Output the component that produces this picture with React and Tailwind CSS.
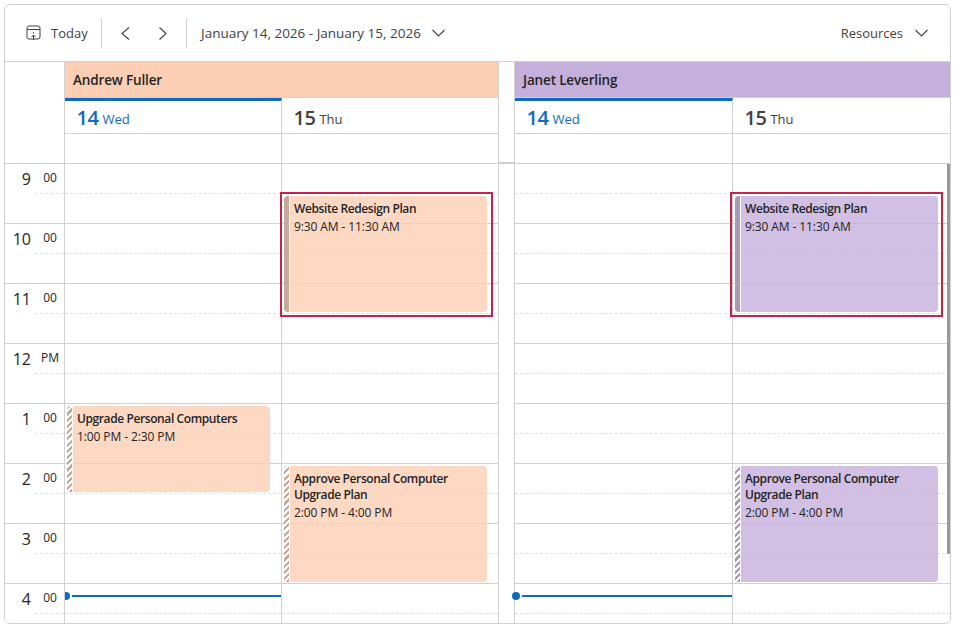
const hours = [
  ['9', '00'],
  ['10', '00'],
  ['11', '00'],
  ['12', 'PM'],
  ['1', '00'],
  ['2', '00'],
  ['3', '00'],
  ['4', '00'],
]

const rows = [0, 1, 2, 3, 4, 5, 6, 7]

function Chevron({ dir }) {
  const d = {
    left: 'M9 .5 2 6.5l7 6',
    right: 'M3.5 .5l6.5 6-6.5 6',
  }[dir]
  return (
    <svg width="12" height="13" viewBox="0 0 12 13" fill="none" stroke="#424242" strokeWidth="1.1">
      <path d={d} />
    </svg>
  )
}

function ChevronDown() {
  return (
    <svg width="13" height="8" viewBox="0 0 13 8" fill="none" stroke="#424242" strokeWidth="1.1">
      <path d="M.5 1l6 6 6-6" />
    </svg>
  )
}

function TodayIcon() {
  return (
    <svg width="15" height="16" viewBox="0 0 15 16" fill="none" stroke="#424242" strokeWidth="1">
      <rect x="1" y="1" width="13" height="13" rx="2" />
      <path d="M1 4.5h13" />
      <path d="M7.5 7v1.5M5.5 12l2-2 2 2M7.5 10v5" />
    </svg>
  )
}

function Event({ color, bar, striped, top, height, left, width, title, time }) {
  return (
    <div
      className={`absolute z-10 flex overflow-hidden rounded-[4px] ${color}`}
      style={{ top, height, left, width }}
    >
      <div className={`w-[6px] shrink-0 border-r border-white ${bar} ${striped ? 'striped' : ''}`} />
      <div className="pl-[4px] pt-[5px] pr-2 text-[12px] leading-4 text-[#242424]">
        <div className="font-semibold tracking-[-0.4px]">{title}</div>
        <div className="mt-[2px] tracking-[-0.1px]">{time}</div>
      </div>
    </div>
  )
}

function Selection({ left }) {
  return (
    <div
      className="absolute top-[28px] z-20 h-[125px] w-[213px] border-2 border-[#c4244a]"
      style={{ left }}
    />
  )
}

function DayColumn({ width, last, children }) {
  return (
    <div
      className={`relative shrink-0 ${last ? '' : 'border-r border-[#d1d1d1]'}`}
      style={{ width }}
    >
      {rows.map((r) => (
        <div key={r} className="h-[60px] border-b border-[#d1d1d1]">
          <div className="h-[30px] border-b border-dashed border-[#e0e0e0]" />
        </div>
      ))}
      {children}
    </div>
  )
}

function NowLine({ left, width }) {
  return (
    <>
      <div className="absolute top-[428px] left-[-3px] z-10 h-2 w-2 rounded-full bg-[#0f6cbd]" />
      <div
        className="absolute top-[431px] z-10 h-[2px] bg-[#0f6cbd]"
        style={{ left, width }}
      />
    </>
  )
}

function DayHead({ num, name, active, width, last }) {
  return (
    <div
      className={`flex h-[36px] shrink-0 items-center border-b border-[#d1d1d1] pl-[11.5px] ${
        active ? 'border-t-[3px] border-t-[#0f6cbd] pt-[1px] text-[#0f6cbd]' : 'pt-[4px] text-[#424242]'
      } ${last ? '' : 'border-r border-r-[#d1d1d1]'}`}
      style={{ width }}
    >
      <span className="text-[20px] font-semibold leading-6 tracking-[-0.5px]">{num}</span>
      <span className="ml-[4px] pt-[3px] text-[13px] leading-5">{name}</span>
    </div>
  )
}

function AllDay({ width, last }) {
  return (
    <div
      className={`h-[30px] shrink-0 border-b border-[#d1d1d1] ${last ? '' : 'border-r'}`}
      style={{ width }}
    />
  )
}

export default function App() {
  return (
    <div className="h-[627px] w-[960px] bg-white pt-[4px] pl-[4px] font-['Open_Sans',sans-serif]">
      <style>{`.striped{background-image:repeating-linear-gradient(-45deg,transparent,transparent 2.2px,#fff 2.2px,#fff 4.4px)}`}</style>
      <div className="relative flex h-[620px] w-[947px] flex-col overflow-hidden rounded-[6px] border border-[#d1d1d1]">
        {/* toolbar */}
        <div className="flex h-[57px] shrink-0 items-center border-b border-[#d1d1d1] text-[13px] text-[#424242]">
          <div className="ml-[21px] flex w-[75px] items-center">
            <TodayIcon />
            <span className="ml-[10px] pt-[1px]">Today</span>
          </div>
          <div className="h-[30px] w-px bg-[#d1d1d1]" />
          <div className="flex w-[84px] items-center justify-between px-[18px]">
            <Chevron dir="left" />
            <Chevron dir="right" />
          </div>
          <div className="h-[30px] w-px bg-[#d1d1d1]" />
          <span className="ml-[14px] pt-[1px] text-[13.5px]">January 14, 2026 - January 15, 2026</span>
          <span className="ml-[11px] flex"><ChevronDown /></span>
          <div className="ml-auto mr-[22px] flex items-center">
            <span className="pt-[1px]">Resources</span>
            <span className="ml-[12px] flex"><ChevronDown /></span>
          </div>
        </div>

        {/* header */}
        <div className="flex h-[102px] shrink-0">
          <div className="w-[60px] shrink-0 border-r border-b border-[#d1d1d1]" />
          <div className="w-[434px] shrink-0">
            <div className="flex h-[36px] items-center border-r border-b border-[#d1d1d1] bg-[#fccfb5] pl-2 pt-[2px] text-[13.5px] font-semibold tracking-[-0.15px] text-[#242424]">
              Andrew Fuller
            </div>
            <div className="flex">
              <DayHead num="14" name="Wed" active width={217} />
              <DayHead num="15" name="Thu" width={217} />
            </div>
            <div className="flex">
              <AllDay width={217} />
              <AllDay width={217} />
            </div>
          </div>
          <div className="w-[16px] shrink-0 border-b border-[#d1d1d1]">
            <div className="h-[101px] border-r border-b border-[#d1d1d1]" />
          </div>
          <div className="flex-1">
            <div className="flex h-[36px] items-center border-b border-[#d1d1d1] bg-[#c5b0dc] pl-2 pt-[2px] text-[13.5px] font-semibold tracking-[-0.15px] text-[#242424]">
              Janet Leverling
            </div>
            <div className="flex">
              <DayHead num="14" name="Wed" active width={218} />
              <DayHead num="15" name="Thu" width={217} last />
            </div>
            <div className="flex">
              <AllDay width={218} />
              <AllDay width={217} last />
            </div>
          </div>
        </div>

        {/* time grid */}
        <div className="flex flex-1 overflow-hidden">
          <div className="relative z-30 w-[60px] shrink-0 border-r border-[#d1d1d1] bg-white">
            {hours.map(([h, m]) => (
              <div key={h} className="h-[60px] border-b border-[#d1d1d1]">
                <div className="flex h-[29px] items-center text-[#242424]">
                  <span className="w-[26px] text-right text-[16px] leading-5">{h}</span>
                  <span className="ml-[10px] mb-[1px] w-[18px] text-center text-[12px] leading-4">{m}</span>
                </div>
                <div className="ml-[30px] border-b border-dashed border-[#e0e0e0]" />
              </div>
            ))}
          </div>

          <DayColumn width={217}>
            <Event
              color="bg-[#fccfb5]/80"
              bar="bg-[#c6a998]"
              striped
              left={2}
              top={242}
              width={203}
              height={86}
              title="Upgrade Personal Computers"
              time="1:00 PM - 2:30 PM"
            />
            <NowLine left={7} width={209} />
          </DayColumn>
          <DayColumn width={217}>
            <Selection left={-2} />
            <Event
              color="bg-[#fccfb5]/80"
              bar="bg-[#c6a998]"
              left={2}
              top={32}
              width={203}
              height={116}
              title="Website Redesign Plan"
              time="9:30 AM - 11:30 AM"
            />
            <Event
              color="bg-[#fccfb5]/80"
              bar="bg-[#c6a998]"
              striped
              left={2}
              top={302}
              width={203}
              height={116}
              title="Approve Personal Computer Upgrade Plan"
              time="2:00 PM - 4:00 PM"
            />
          </DayColumn>

          <div className="w-[16px] shrink-0 border-r border-[#d1d1d1]" />

          <DayColumn width={218}>
            <NowLine left={7} width={210} />
          </DayColumn>
          <DayColumn width={217} last>
            <Selection left={-3} />
            <Event
              color="bg-[#c5b0dc]/80"
              bar="bg-[#a899b5]"
              left={2}
              top={32}
              width={203}
              height={116}
              title="Website Redesign Plan"
              time="9:30 AM - 11:30 AM"
            />
            <Event
              color="bg-[#c5b0dc]/80"
              bar="bg-[#a899b5]"
              striped
              left={2}
              top={302}
              width={203}
              height={116}
              title="Approve Personal Computer Upgrade Plan"
              time="2:00 PM - 4:00 PM"
            />
          </DayColumn>
        </div>

        {/* scrollbar */}
        <div className="absolute top-[159px] right-0 z-40 h-[390px] w-[3px] bg-[#9a9a9a]" />
      </div>
    </div>
  )
}
